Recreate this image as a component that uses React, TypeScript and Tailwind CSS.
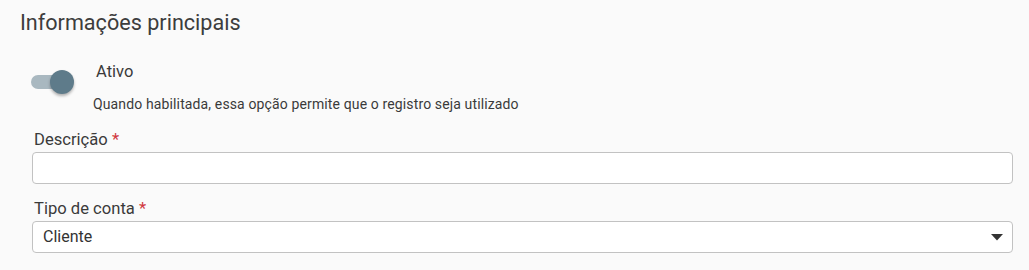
function Toggle({ checked }: { checked: boolean }) {
  return (
    <div className="relative w-[44px] h-[24px] shrink-0">
      <div
        className={
          checked
            ? "absolute left-0 top-[5px] w-[34px] h-[14px] rounded-full bg-[#a9b8c0]"
            : "absolute left-0 top-[5px] w-[34px] h-[14px] rounded-full bg-[#bdbdbd]"
        }
      />
      <div
        className={
          checked
            ? "absolute left-[19px] top-0 w-[24px] h-[24px] rounded-full bg-[#5e7b8a] shadow-[0_2px_3px_rgba(0,0,0,0.3)]"
            : "absolute left-0 top-0 w-[24px] h-[24px] rounded-full bg-white shadow-[0_2px_3px_rgba(0,0,0,0.3)]"
        }
      />
    </div>
  );
}

function Label({ text }: { text: string }) {
  return (
    <label className="block ml-[2px] text-[16.6px] leading-[20px] text-[#3a3a3a]">
      {text} <span className="text-[#d0383d]">*</span>
    </label>
  );
}

export default function App() {
  return (
    <div
      className="w-full h-[270px] bg-[#fafafa] pt-[11px] pr-[16px] overflow-hidden"
      style={{ fontFamily: "Roboto, 'Liberation Sans', sans-serif" }}
    >
      <h2 className="pl-[20px] text-[21.6px] leading-[24px] text-[#3d3d3d]">
        Informações principais
      </h2>

      <div className="pl-[31px] mt-[27px] flex items-start">
        <div className="mt-[8px]">
          <Toggle checked />
        </div>
        <div className="ml-[18px]">
          <div className="ml-[3px] text-[16.5px] leading-[20px] text-[#3a3a3a]">Ativo</div>
          <div className="mt-[14px] text-[14px] leading-[16px] tracking-[0.13px] text-[#3a3a3a]">
            Quando habilitada, essa opção permite que o registro seja utilizado
          </div>
        </div>
      </div>

      <div className="pl-[32px] mt-[18px]">
        <Label text="Descrição" />
        <input
          type="text"
          className="block w-full mt-[2px] h-[32px] bg-white border border-[#c2c2c2] rounded-[4px] px-[10px] text-[16px] text-[#333] outline-none"
        />

        <div className="mt-[15px]">
          <Label text="Tipo de conta" />
        </div>
        <div className="mt-[2px] flex items-center h-[32px] bg-white border border-[#c2c2c2] rounded-[4px] pl-[10px] pr-[8px] text-[16px] text-[#333]">
          <span className="flex-1">Cliente</span>
          <svg width="12" height="7" viewBox="0 0 12 7" className="mr-[1px]">
            <path d="M0 0 L12 0 L6 6.5 Z" fill="#333" />
          </svg>
        </div>
      </div>
    </div>
  );
}
